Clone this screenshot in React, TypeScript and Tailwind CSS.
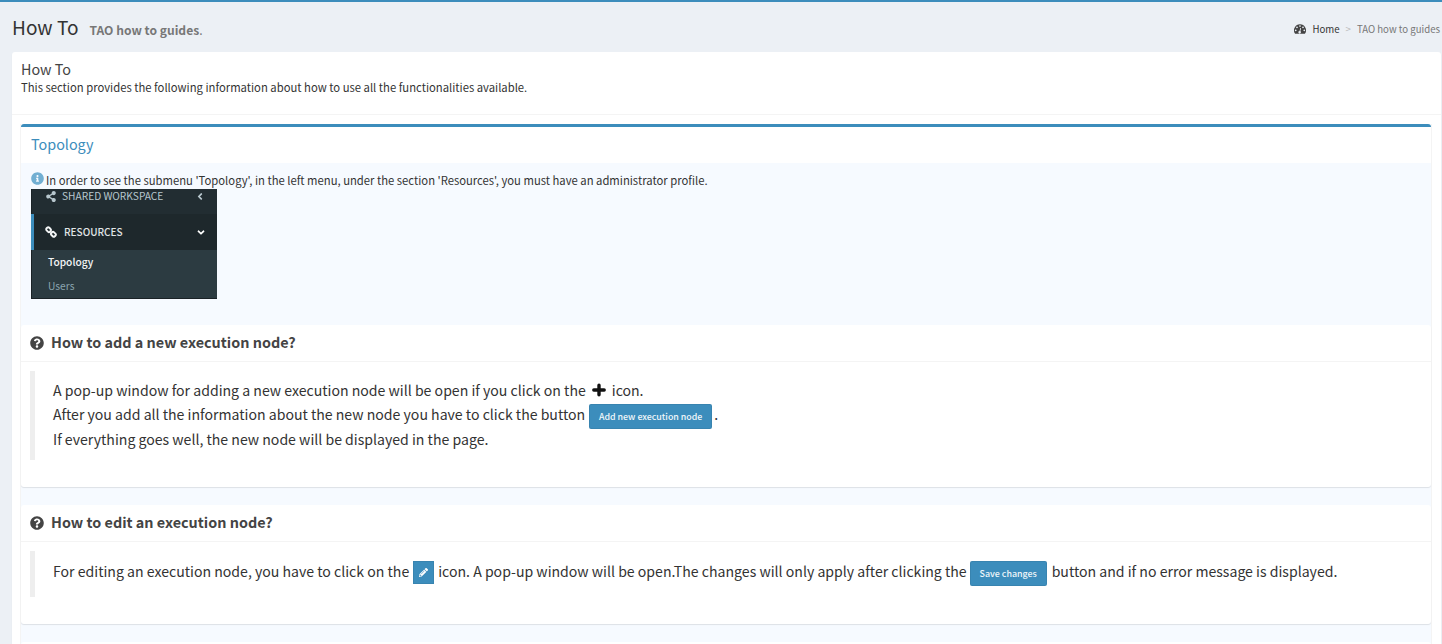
import type { ReactNode } from "react";
import {
  FaAngleDown,
  FaAngleLeft,
  FaInfoCircle,
  FaPencilAlt,
  FaQuestionCircle,
  FaShareAlt,
} from "react-icons/fa";

function DashboardIcon() {
  return (
    <svg viewBox="0 128 1792 1408" className="h-[10px] w-[12px] fill-[#444]">
      <path
        fillRule="evenodd"
        d="M896 128a896 896 0 0 0-755 1378q14 30 54 30h1402q40 0 54-30A896 896 0 0 0 896 128zM256 896a128 128 0 1 1 0 256 128 128 0 0 1 0-256zM448 448a128 128 0 1 1 0 256 128 128 0 0 1 0-256zM896 256a128 128 0 1 1 0 256 128 128 0 0 1 0-256zM1344 448a128 128 0 1 1 0 256 128 128 0 0 1 0-256zM1536 896a128 128 0 1 1 0 256 128 128 0 0 1 0-256zM1004 689q-25-7-48 6t-29 39l-101 382q-60 5-107 44t-63 98q-20 77 20 146t117 89 146-20 89-117q16-60-6-117t-72-91l101-382q6-26-7-48t-40-29z"
      />
    </svg>
  );
}

function ChainIcon() {
  return (
    <svg viewBox="0 0 24 24" className="h-[12px] w-[12px]" fill="none" stroke="#f4f6f7" strokeWidth="3.8">
      <rect x="2.4" y="3.6" width="9.6" height="7.6" rx="3" transform="rotate(45 7.2 7.4)" />
      <rect x="12" y="12.8" width="9.6" height="7.6" rx="3" transform="rotate(45 16.8 16.6)" />
      <path d="M9.5 9.5l5 5" strokeWidth="3" />
    </svg>
  );
}

function PlusIcon() {
  return (
    <svg viewBox="0 0 14 14" className="mr-[6px] ml-[6px] h-[14px] w-[14px]">
      <path d="M7 2.2v9.6M1.8 7h10.4" fill="none" stroke="#111" strokeWidth="3.4" strokeLinecap="round" />
    </svg>
  );
}

function Button({ children, className }: { children: ReactNode; className: string }) {
  return (
    <button
      className={`flex h-[25px] shrink-0 items-center justify-center rounded-[2px] border border-[#367fa9]/60 bg-[#3c8dbc] text-[#f1f7fa] ${className}`}
    >
      {children}
    </button>
  );
}

function GuideCard({ title, className, children }: { title: string; className: string; children: ReactNode }) {
  return (
    <section className={`shrink-0 rounded-[3px] bg-white shadow-[0_1px_1px_rgba(0,0,0,0.1)] ${className}`}>
      <h4 className="flex h-[37px] items-center border-b border-[#f4f4f4] pb-px pl-[9px] text-[14.4px] leading-5 font-bold text-[#444]">
        <FaQuestionCircle className="mr-[7px] h-[14px] w-[14px]" />
        <span className="-mt-px">{title}</span>
      </h4>
      <div className="pt-[9px] pl-[9px]">{children}</div>
    </section>
  );
}

function SideMenu() {
  return (
    <div className="ml-px flex h-[110px] w-[186px] flex-col border-b border-l border-[#1a2226] bg-[#2c3b41] text-[10.2px] leading-4">
      <div className="flex h-[25px] items-start bg-[#222d32] pl-[14px] text-[#b8c7ce]">
        <FaShareAlt className="mt-[2px] h-[11px] w-[10px]" />
        <span className="-mt-px ml-[6px] w-[134px]">SHARED WORKSPACE</span>
        <FaAngleLeft className="mt-[2px] h-[11px] w-[8px]" />
      </div>
      <div className="-ml-px flex h-[36px] items-center border-l-[3px] border-[#3c8dbc] bg-[#1e282c] pl-[11px] text-white">
        <ChainIcon />
        <span className="ml-[7px] w-[132px] text-[10px] font-medium text-[#e0e5e7]">RESOURCES</span>
        <FaAngleDown className="h-[11px] w-[10px]" />
      </div>
      <div className="flex h-[24px] items-center pl-[16px] font-medium text-[#f4f6f7]">Topology</div>
      <div className="flex h-[24px] items-center pl-[16px] text-[#8aa4af]">Users</div>
    </div>
  );
}

export default function App() {
  return (
    <div className="flex h-[644px] w-full flex-col overflow-hidden border-t-2 border-[#3c8dbc] bg-[#ecf0f5] font-['Noto_Sans_CJK_SC',sans-serif] text-[#333]">
      <header className="flex h-[50px] shrink-0 items-start justify-between pr-[2px] pl-[12px]">
        <h1 className="flex items-baseline pt-[11px] text-[19.07px] leading-7">
          How To
          <small className="ml-[11px] text-[12.1px] font-bold text-[#777]">
            TAO how to guides<span className="font-normal">.</span>
          </small>
        </h1>
        <nav className="flex items-center pt-[19px] text-[9.65px] leading-4">
          <DashboardIcon />
          <span className="ml-[6px] text-[#333]">Home</span>
          <span className="mx-[6px] text-[#bbb]">&gt;</span>
          <span className="text-[#777]">TAO how to guides</span>
        </nav>
      </header>

      <main className="mr-px ml-[12px] flex h-[620px] shrink-0 flex-col rounded-[3px] bg-white shadow-[0_1px_1px_rgba(0,0,0,0.1)]">
        <div className="h-[63px] shrink-0 border-b border-[#f4f4f4] pt-[9px] pl-[9px]">
          <h3 className="text-[14.34px] leading-4 text-[#444]">How To</h3>
          <p className="text-[11.28px] leading-5">
            This section provides the following information about how to use all the functionalities available.
          </p>
        </div>

        <div className="mt-[9px] mr-[9px] ml-[8px] flex flex-1 flex-col border-x border-[#f4f4f4]">
          <div className="h-[3px] shrink-0 rounded-t-[3px] bg-[#3c8dbc]" />
          <h3 className="flex h-[36px] shrink-0 items-center pb-[2px] pl-[10px] text-[14.37px] text-[#3c8dbc]">
            Topology
          </h3>
          <div className="flex flex-1 flex-col bg-[#f6faff]">
            <div className="h-[162px] shrink-0 pl-[9px]">
              <p className="flex h-[26px] items-start pt-[8px] pl-px text-[11.27px] leading-[18px]">
                <FaInfoCircle className="mt-px mr-[2px] h-[13px] w-[13px] text-[#72afd2]" />
                In order to see the submenu &apos;Topology&apos;, in the left menu, under the section
                &apos;Resources&apos;, you must have an administrator profile.
              </p>
              <SideMenu />
            </div>

            <GuideCard title="How to add a new execution node?" className="h-[162px]">
              <blockquote className="h-[89px] border-l-5 border-[#eee] pt-[7px] pl-[18px] text-[14.1px] leading-6">
                <p className="flex h-[24px] items-center">
                  A pop-up window for adding a new execution node will be open if you click on the
                  <PlusIcon />
                  icon.
                </p>
                <p className="flex h-[24px] items-center">
                  After you add all the information about the new node you have to click the button
                  <Button className="mt-[5px] mr-[2px] ml-[4px] w-[123px] text-[8.85px] font-medium">
                    Add new execution node
                  </Button>
                  .
                </p>
                <p className="flex h-[26px] items-center">
                  If everything goes well, the new node will be displayed in the page.
                </p>
              </blockquote>
            </GuideCard>

            <GuideCard title="How to edit an execution node?" className="mt-[18px] h-[119px]">
              <blockquote className="h-[46px] border-l-5 border-[#eee] pt-[8px] pl-[18px] text-[14.1px] leading-6">
                <p className="flex h-[24.5px] items-center">
                  For editing an execution node, you have to click on the
                  <span className="mt-[3px] mr-[4px] ml-[4px] flex h-[23px] w-[21px] items-center justify-center border border-[#367fa9]/60 bg-[#3c8dbc]">
                    <FaPencilAlt className="h-[9px] w-[9px] text-white" />
                  </span>
                  icon. A pop-up window will be open.The changes will only apply after clicking the
                  <Button className="mt-[5px] mr-[5px] ml-[3px] w-[77px] text-[8.9px] font-medium">Save changes</Button>
                  button and if no error message is displayed.
                </p>
              </blockquote>
            </GuideCard>

            <div className="mt-[18px] h-[10px] rounded-t-[3px] bg-white" />
          </div>
        </div>
      </main>
    </div>
  );
}
